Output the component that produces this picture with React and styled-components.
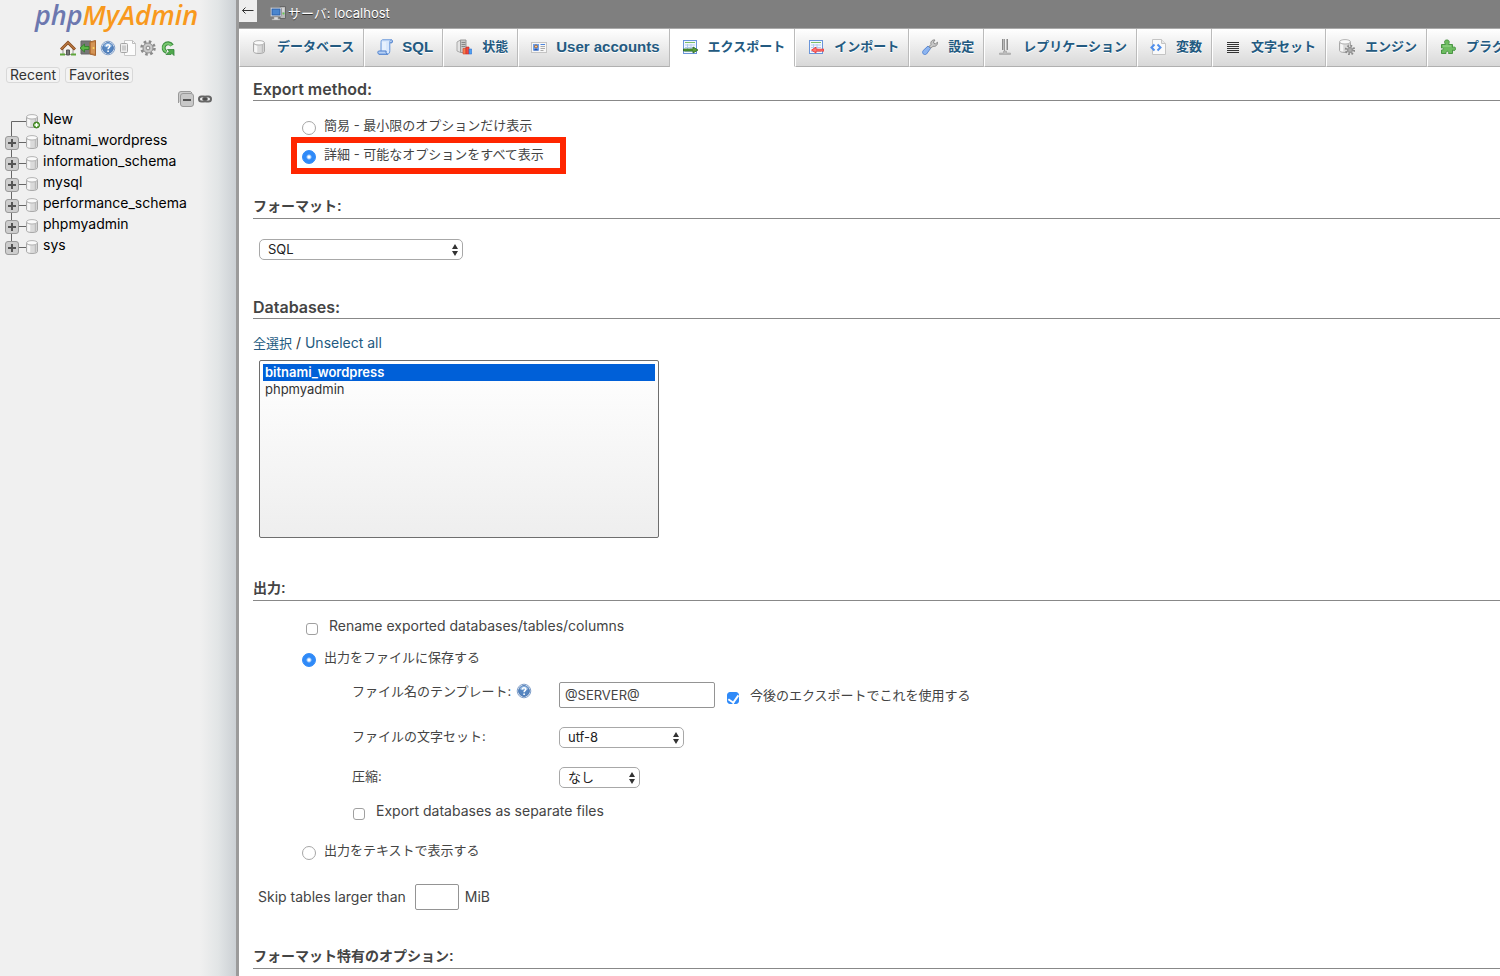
import React, { useState } from 'react';
import styled, { createGlobalStyle, css } from 'styled-components';

const SANS = `Inter, "Noto Sans CJK JP", sans-serif`;
const BOLD = `"Liberation Sans", "Noto Sans CJK JP", sans-serif`;

const GlobalStyle = createGlobalStyle`
  * { box-sizing: border-box; }
  body {
    margin: 0;
    background: #fff;
    color: #444;
    font: 13px/20px ${SANS};
  }
  button, input, select { font: inherit; color: inherit; }
  a { color: #235a81; text-decoration: none; }
`;

/* ---------- page frame ---------- */

const Page = styled.div`
  display: flex;
  min-height: 100vh;
`;

const Sidebar = styled.aside`
  flex: 0 0 239px;
  border-right: 3px solid #9b9b9b;
  background: linear-gradient(to right, #f0f0f0 200px, #e2e5e6 218px, #cbd0d4 236px);
  color: #000;
`;

const Main = styled.main`
  flex: 1;
  min-width: 0;
`;

/* ---------- sidebar ---------- */

const Logo = styled.a`
  display: block;
  padding: 0 0 4px 35px;
  font: italic 600 27px/30px "Open Sans", sans-serif;
  color: #f8991d;
`;

const LogoPhp = styled.span`
  color: #6c78af;
`;

const IconBar = styled.nav`
  display: flex;
  gap: 4px;
  padding: 6px 0 0 60px;

  a { display: flex; }
`;

const PanelButtons = styled.div`
  display: flex;
  gap: 5px;
  padding: 11px 0 0 6px;
`;

const PanelButton = styled.button`
  height: 16px;
  padding: 0 3px;
  border: 1px solid #d8d8d8;
  border-radius: 3px;
  background: #f3f3f3;
  color: #333;
  font-size: 14px;
  line-height: 14px;
`;

const TreeTools = styled.div`
  display: flex;
  align-items: center;
  gap: 4px;
  padding: 8px 0 1px 178px;
`;

const PlainButton = styled.button`
  display: flex;
  padding: 0;
  border: 0;
  background: none;
`;

const Tree = styled.ul`
  margin: 0;
  padding: 0 0 0 5px;
  list-style: none;
`;

const TreeRow = styled.li`
  display: flex;
  height: 21px;
  font-size: 14px;
  line-height: 21px;

  a { padding-left: 3px; color: #000; }
`;

/* ---------- header and tabs ---------- */

const ServerBar = styled.header`
  display: flex;
  align-items: flex-start;
  height: 28px;
  background: #7f7f7f;
  color: #fff;
  line-height: 26px;
  text-shadow: 0 1px 0 #333;
`;

const CollapseButton = styled.button`
  display: flex;
  align-items: center;
  justify-content: center;
  width: 18px;
  height: 22px;
  margin-right: 13px;
  padding: 0;
  border: 0;
  background: #eee;
  color: #333;
`;

const ServerName = styled.a`
  display: flex;
  align-items: center;
  gap: 2px;
  color: #fff;
`;

const Tabs = styled.nav`
  display: flex;
  height: 39px;
  overflow: hidden;
  border-top: 1px solid #aaa;
  background: #f4f4f4;
`;

const Tab = styled.a`
  display: flex;
  flex: none;
  align-items: center;
  gap: ${(p) => (p.$latin ? 9 : 10)}px;
  padding: 0 9px 1px 11px;
  border-right: 1px solid #bbb;
  border-left: 1px solid #fff;
  border-bottom: 1px solid #b0b0b0;
  background: linear-gradient(#fff, #d8d8d8);
  font: bold ${(p) => (p.$latin ? 15 : 13)}px/20px ${BOLD};
  text-shadow: 0 1px 0 #fff;
  white-space: nowrap;

  & + & { padding-left: ${(p) => (p.$latin ? 11 : 12)}px; }

  ${(p) => p.$active && css`
    && { padding-left: 11px; }
    border-bottom-color: #fff;
    background: #fff;
  `}
`;

/* ---------- form ---------- */

const Form = styled.form`
  padding: 10px 0 7px 14px;
`;

const Section = styled.section`
  padding-bottom: ${(p) => p.$after || 0}px;
`;

const Heading = styled.h3`
  height: 24px;
  margin: 0;
  border-bottom: 1px solid #888;
  font: bold 14px/22px ${BOLD};

  ${(p) => p.$latin && css`
    font: 600 16px/24px ${SANS};
  `}
`;

const OptionList = styled.div`
  display: flex;
  flex-direction: column;
  align-items: flex-start;
  gap: 9px;
  padding: 14px 0 0 49px;
`;

const Choice = styled.label`
  position: relative;
  display: flex;
  align-items: center;
  gap: ${(p) => (p.$box ? 11 : 8)}px;
  height: 20px;
  font-size: ${(p) => (p.$latin ? 14 : 13)}px;
  white-space: nowrap;
`;

const Highlight = styled.span`
  position: absolute;
  inset: -7px -22px -10px -11px;
  border: 6px solid #ff2600;
  pointer-events: none;
`;

const Radio = styled.input.attrs({ type: 'radio' })`
  appearance: none;
  width: 14px;
  height: 14px;
  margin: 6px 0 0;
  border: 1px solid #a6a6a6;
  border-radius: 50%;
  background: #fff;

  &:checked {
    border-color: #2f8af8;
    background: radial-gradient(circle, #fff 1px, #2f8af8 3px);
  }
`;

const Check = styled.input.attrs({ type: 'checkbox' })`
  appearance: none;
  display: grid;
  justify-items: center;
  width: 12px;
  height: 12px;
  margin: 6px 0 0;
  border: 1px solid #a0a0a0;
  border-radius: 3px;
  background: #fff;

  &:checked {
    border-color: #2f8af8;
    background: #2f8af8;
  }

  &:checked::after {
    content: "";
    width: 5px;
    height: 8px;
    border: solid #fff;
    border-width: 0 2px 2px 0;
    transform: rotate(35deg);
  }
`;

const SelectWrap = styled.span`
  position: relative;
  display: block;
  width: ${(p) => p.$width}px;

  svg {
    position: absolute;
    top: 5px;
    right: 4px;
    pointer-events: none;
  }
`;

const SelectBox = styled.select`
  appearance: none;
  display: block;
  width: 100%;
  height: 21px;
  padding: 0 18px 0 8px;
  border: 1px solid #a8a8a8;
  border-radius: 5px;
  background: #fff;
  color: #222;
  line-height: 19px;
`;

const FormatField = styled.div`
  padding: 20px 0 0 6px;
`;

const SelectLinks = styled.div`
  padding-top: 14px;
  color: #333;
  font-size: 14px;

  a:first-child { font-size: 13px; }
`;

const DatabaseList = styled.select`
  display: block;
  width: 400px;
  height: 178px;
  margin: 7px 0 0 6px;
  padding: 3px;
  border: 1px solid #6e6e6e;
  border-radius: 2px;
  background: linear-gradient(#fff, #eee);
  outline: 0;

  option {
    min-height: 17px;
    padding: 0 2px;
    color: #333;
    line-height: 17px;
  }

  option:checked {
    background: linear-gradient(#0060d8, #0060d8);
    color: #fff;
    font-weight: 600;
  }
`;

const OutputList = styled.div`
  display: flex;
  flex-direction: column;
  align-items: flex-start;
  gap: 11px;
  padding: 15px 0 0 49px;
`;

const RenameRow = styled.div`
  padding-left: 4px;
`;

const FileFields = styled.div`
  display: flex;
  flex-direction: column;
  gap: 19px;
  padding: 4px 0 8px 50px;
`;

const FieldRow = styled.div`
  display: grid;
  grid-template-columns: 207px auto auto;
  align-items: start;
  line-height: 18px;
`;

const FieldLabel = styled.div`
  display: flex;
  align-items: center;
  gap: 5px;
  height: 18px;

  a { display: flex; }
`;

const TextInput = styled.input`
  width: ${(p) => p.$width}px;
  height: 26px;
  padding: 0 5px;
  border: 1px solid #949494;
  border-radius: 2px;
  background: #fff;
`;

const AfterInput = styled.div`
  padding: 3px 0 0 12px;
`;

const SeparateRow = styled.div`
  padding-left: 1px;
  margin-top: -6px;
`;

const SkipRow = styled.div`
  display: flex;
  align-items: center;
  padding: 24px 0 0 5px;
  font-size: 14px;

  input { margin: 0 6px 0 9px; font-size: 13px; }
`;

/* ---------- drawings ---------- */

const Icon = ({ children, w = 16, h = 16 }) => (
  <svg width={w} height={h} viewBox={`0 0 ${w} ${h}`} fill="none" aria-hidden="true">{children}</svg>
);

const Cylinder = ({ x = 0, y = 0 }) => (
  <g transform={`translate(${x} ${y})`}>
    <path d="M.5 3v8.500c0 1.200 2.400 2 5.500 2s5.500-.8 5.500-2V3z" fill="#dadada" stroke="#a8a8a8" />
    <path d="M2 5v7.200M3.500 5.500v7" stroke="#f6f6f6" strokeWidth="1.500" />
    <path d="M9.500 5v7.500" stroke="#bcbcbc" strokeWidth="1.500" />
    <ellipse cx="6" cy="2.800" rx="5.500" ry="2.200" fill="#fafafa" stroke="#b4b4b4" />
  </g>
);

const Gear = ({ x, y, r }) => (
  <g transform={`translate(${x} ${y})`}>
    <circle r={r - 1} stroke="#8a8a8a" strokeWidth="2.500" strokeDasharray={`${((r - 1) * Math.PI) / 8} ${((r - 1) * Math.PI) / 8}`} />
    <circle r={r - 2.5} fill="#c9c9c9" stroke="#8a8a8a" />
    <circle r={r / 4} fill="#f2f2f2" stroke="#888" />
  </g>
);

const Home = () => (
  <Icon>
    <path d="M3 8v6.500h10V8L8 3z" fill="#f5f2ee" stroke="#999" />
    <path d="M6.500 15v-5h3v5z" fill="#777" stroke="#555" />
    <path d="M1 9.500 8 2.500l7 7" stroke="#8a4a1c" strokeWidth="3" />
    <path d="M1.500 9 8 2.500 14.500 9" stroke="#d99a5c" />
    <path d="M0 14.500h5M11 14.500h5" stroke="#5fa53a" strokeWidth="2" />
  </Icon>
);

const Exit = () => (
  <Icon>
    <path d="M1 1h10v13H1z" fill="#777" stroke="#666" />
    <path d="m10 2 5.500-1.500v15L10 14z" fill="#c98545" stroke="#a5642f" />
    <path d="M12 3v10M14 2.500v11" stroke="#e0a568" />
    <path d="m0 8 4.500-4v2.500H9v3H4.500V12z" fill="#5cb548" stroke="#2f7d28" strokeWidth=".8" />
    <circle cx="13.500" cy="8" r="1" fill="#ffd75e" />
  </Icon>
);

const Help = () => (
  <Icon>
    <circle cx="8" cy="8" r="6.800" fill="#fff" stroke="#7f9fca" />
    <circle cx="8" cy="8" r="5.400" fill="#5585c0" stroke="#4a76b2" />
    <path d="M3.600 6a4.700 4.700 0 0 1 8.800 0c-2 1.600-6 1.800-8.800 0z" fill="#8db4df" />
    <path d="M6.300 6.500c0-2.400 3.600-2.300 3.500-.2 0 1.400-1.700 1.400-1.700 2.900" stroke="#fff" strokeWidth="1.500" />
    <circle cx="8.100" cy="11.200" r=".9" fill="#fff" />
  </Icon>
);

const Docs = () => (
  <Icon>
    <path d="M4.500.5h8l3 3v12h-11z" fill="#fcfcfc" stroke="#c8c8c8" />
    <path d="M12.500.5v3h3" stroke="#bdbdbd" />
    <rect x=".5" y="3.500" width="7" height="9" rx="1" fill="#ededed" stroke="#a5a5a5" />
    <path d="M3 5.500v5M5 5.500v5" stroke="#aaa" />
  </Icon>
);

const Settings = () => (
  <Icon><Gear x={8} y={8} r={7.5} /></Icon>
);

const Reload = () => (
  <Icon>
    <path d="M12 5.500A4.500 4.500 0 1 0 6.500 12" stroke="#3d8f40" strokeWidth="4" />
    <path d="M14 9.500H7.500l1.800 1.700L6 14.500h5l1-1 2 2z" fill="#4fa84c" stroke="#34833a" strokeWidth=".8" />
    <path d="M11.500 5.500A4.300 4.300 0 1 0 6.500 11.800" stroke="#79c870" strokeWidth="2" />
  </Icon>
);

const CollapseAll = () => (
  <Icon>
    <path d="M.5 12V3A2.500 2.500 0 0 1 3 .5h9.500L14 2" fill="#ccc" stroke="#999" />
    <rect x="2.500" y="2.500" width="13" height="13" rx="2.500" fill="#c8c8c8" stroke="#999" />
    <path d="M5 9h8" stroke="#555" strokeWidth="2" />
  </Icon>
);

const Link = () => (
  <Icon w={14}>
    <rect x="1" y="5.500" width="7" height="5" rx="2.500" stroke="#666" strokeWidth="2" />
    <rect x="6" y="5.500" width="7" height="5" rx="2.500" stroke="#666" strokeWidth="2" />
    <path d="M4 8h6" stroke="#333" />
  </Icon>
);

const Twig = ({ first, last }) => (
  <Icon w={21} h={21}>
    <path d={first ? 'M6.500 21V13.500H21' : `M6.500 0V${last ? 13 : 21}M7 13.500h14`} stroke="#666" />
    {!first && (
      <>
        <rect x=".5" y="7.500" width="13" height="13" rx="2.500" fill="#cdcdcd" stroke="#999" />
        <path d="M3 14h8M7 10v8" stroke="#555" strokeWidth="2" />
      </>
    )}
  </Icon>
);

const DbIcon = ({ add }) => (
  <Icon w={14} h={21}>
    <Cylinder y={6} />
    {add && (
      <>
        <circle cx="10.500" cy="17" r="3" fill="#5aa832" stroke="#38761d" />
        <path d="M8.500 17h4M10.500 15v4" stroke="#fff" strokeWidth="1.300" />
      </>
    )}
  </Icon>
);

const ServerIcon = () => (
  <Icon>
    <path d="M10 1.500h5.500v12H10z" fill="#b9b9b9" stroke="#666" />
    <path d="M11.500 4h3M11.500 6h3" stroke="#eee" />
    <circle cx="13.500" cy="8.500" r="1" fill="#5fd04a" />
    <rect x=".5" y="2.500" width="11" height="9" rx="1" fill="#e8e8e8" stroke="#999" />
    <rect x="2" y="4" width="8" height="6" fill="#4a86cf" stroke="#2d5fa6" />
    <path d="M4 12h4v2h2v1H2v-1h2z" fill="#ddd" stroke="#999" strokeWidth=".5" />
  </Icon>
);

const TabDatabase = () => <Icon><Cylinder x={2} y={1} /></Icon>;

const TabSql = () => (
  <Icon>
    <path d="M4 3.500C4 1.800 4.500.8 5.500.8h9c-1.200.2-1.700 1-1.700 2.700v8c0 2-.5 3.200-2 3.700H2C3.300 14.500 4 13.500 4 12z" fill="#d9e8fc" stroke="#6494da" />
    <path d="M2 15.200C.6 15 .5 12.800 1.500 12h7.700c-.6 1.200 0 3 1.500 3.200z" fill="#b6d0f5" stroke="#4c7fcc" />
    <path d="M14.500.8c1.200.3 1.200 2 .5 3h-2.200" fill="#a9c6f0" stroke="#4c7fcc" />
    <path d="M6 3v8M8 3v8" stroke="#f4f9ff" />
  </Icon>
);

const TabStatus = () => (
  <Icon>
    <path d="M1 3 4.500 1v12.500L1 12z" fill="#e4e4e4" stroke="#aaa" />
    <path d="M4.500 1H10v12.500H4.500z" fill="#c9c9c9" stroke="#999" />
    <path d="M5.500 3.500h4M5.500 5.500h4M5.500 7.500h4" stroke="#888" />
    <path d="M7 9.500h3V15H7z" fill="#f47c4e" stroke="#d0402a" strokeWidth=".6" />
    <path d="M10 8h3v7h-3z" fill="#f2463c" stroke="#c42a24" strokeWidth=".6" />
    <path d="M13 10h2.700v5H13z" fill="#4ea0f2" stroke="#2e6fd0" strokeWidth=".6" />
  </Icon>
);

const TabUsers = () => (
  <Icon>
    <rect x=".5" y="3.500" width="15" height="10" fill="#f7f7f7" stroke="#c4c4c4" />
    <path d="M2 5h6v6.500H2z" fill="#6aa0ee" />
    <circle cx="5" cy="7.500" r="1.500" fill="#f4c28e" stroke="#8e562c" strokeWidth=".8" />
    <path d="M2.500 11.500c.5-2 4.500-2 5 0z" fill="#2753a8" />
    <path d="M9.500 7.500h4.500M9.500 9.500h4.500M9.500 11.500h3" stroke="#aaa" />
    <path d="M9.500 5.500h4.500" stroke="#4d85dc" />
  </Icon>
);

const Sheet = () => (
  <>
    <rect x="1.500" y="1.500" width="13" height="13" fill="#f3f8ff" stroke="#6a95da" />
    <path d="M3 3.500h10" stroke="#7cbf68" />
    <path d="M3 6h10M3 8.500h10M3 12.500h10M5.500 5v8M9 5v8" stroke="#b4ccee" />
  </>
);

const TabExport = () => (
  <Icon>
    <Sheet />
    <path d="M1.500 10h9.500V8l5 3-5 3v-2H1.500z" fill="#5aa03c" stroke="#2c6a1c" strokeWidth=".8" />
  </Icon>
);

const TabImport = () => (
  <Icon>
    <Sheet />
    <path d="M16 10.200H8V8.200l-4.500 2.900L8 14v-1.900h8z" fill="#ff7a72" stroke="#ee2a2a" strokeWidth=".8" />
  </Icon>
);

const TabSettings = () => (
  <Icon>
    <path d="m8.500 9.500-2.500-2.500L1.200 11.500c-1.800 2.500.8 5.200 3.300 3.500z" fill="#8cb4f0" stroke="#5a88d2" />
    <path d="M7 7.500 9 5.500c-.8-2.500 1-5 4-4.500L11.500 3l.5 1.500 1.500.3 2-1.600c.3 3-2.200 4.800-4.500 4L9 9.200z" fill="#c8c8c8" stroke="#8a8a8a" />
  </Icon>
);

const TabReplication = () => (
  <Icon>
    <path d="M5.500 0v11M10.500 0v11" stroke="#8a8a8a" />
    <path d="M6.500 0v11M9.500 0v11" stroke="#bbb" />
    <path d="M7.500 0v12" stroke="#999" />
    <path d="M6.500 12h3v2h4v1.500h-11V14h4z" fill="#bbb" stroke="#999" strokeWidth=".5" />
  </Icon>
);

const TabVariables = () => (
  <Icon>
    <path d="M2.500.5h9l4 4v11h-13z" fill="#fafafa" stroke="#c4c4c4" />
    <path d="M11.500.5v4h4" fill="#e8e8e8" stroke="#c4c4c4" />
    <path d="M4.500 5.500 1.500 8.500l3 3M7.500 5.500l3 3-3 3" stroke="#4f8eec" strokeWidth="2" />
  </Icon>
);

const TabCharsets = () => (
  <Icon>
    <path d="M2 3.500h12M2 5.500h12M2 7.500h12M2 9.500h12M2 11.500h12M2 13.500h12" stroke="#333" />
  </Icon>
);

const TabEngines = () => (
  <Icon>
    <Cylinder />
    <circle cx="11" cy="11" r="4" fill="#ddd" />
    <Gear x={11} y={11} r={5} />
  </Icon>
);

const TabPlugins = () => (
  <Icon>
    <path d="M1.500 5.500h4C3.500 2 5 1 7 1s3 1.500 1.500 4.500h4v3c2-1 3-.5 3 1.200s-1 2.300-3 1.300v3.500h-4c1-3-3-3-2.500 0H1.500v-3.500c2.500.5 2.500-3 0-2z" fill="#6dbc60" stroke="#4a9644" />
    <path d="M3 7h8" stroke="#9ad78e" />
  </Icon>
);

const BackArrow = () => (
  <Icon w={14} h={14}>
    <path d="M1.500 6.500h11M4.500 3.500l-3 3 3 3" stroke="#333" />
  </Icon>
);

const Arrows = () => (
  <Icon w={8} h={12}>
    <path d="M4 0l3 5H1zM4 12l3-5H1z" fill="#333" />
  </Icon>
);

/* ---------- assembled parts ---------- */

const NAV_ICONS = [
  ['ホーム', Home], ['ログアウト', Exit], ['phpMyAdmin ドキュメント', Help],
  ['ドキュメント', Docs], ['設定', Settings], ['再読込', Reload],
];

const DATABASES = ['bitnami_wordpress', 'information_schema', 'mysql', 'performance_schema', 'phpmyadmin', 'sys'];

const TABS = [
  ['データベース', TabDatabase], ['SQL', TabSql, true], ['状態', TabStatus],
  ['User accounts', TabUsers, true], ['エクスポート', TabExport], ['インポート', TabImport],
  ['設定', TabSettings], ['レプリケーション', TabReplication], ['変数', TabVariables],
  ['文字セット', TabCharsets], ['エンジン', TabEngines], ['プラグイン', TabPlugins],
];

const Dropdown = ({ id, label, width, options }) => (
  <SelectWrap $width={width}>
    <SelectBox id={id} aria-label={label}>
      {options.map((o) => <option key={o}>{o}</option>)}
    </SelectBox>
    <Arrows />
  </SelectWrap>
);

const Navigation = () => (
  <Sidebar>
    <Logo href="#home"><LogoPhp>php</LogoPhp>MyAdmin</Logo>
    <IconBar>
      {NAV_ICONS.map(([name, Glyph]) => (
        <a key={name} href="#nav" aria-label={name}><Glyph /></a>
      ))}
    </IconBar>
    <PanelButtons>
      <PanelButton type="button">Recent</PanelButton>
      <PanelButton type="button">Favorites</PanelButton>
    </PanelButtons>
    <TreeTools>
      <PlainButton type="button" aria-label="Collapse all"><CollapseAll /></PlainButton>
      <PlainButton type="button" aria-label="Link with main panel"><Link /></PlainButton>
    </TreeTools>
    <Tree>
      <TreeRow>
        <Twig first />
        <DbIcon add />
        <a href="#new">New</a>
      </TreeRow>
      {DATABASES.map((name, i) => (
        <TreeRow key={name}>
          <PlainButton type="button" aria-label={`Expand ${name}`}>
            <Twig last={i === DATABASES.length - 1} />
          </PlainButton>
          <DbIcon />
          <a href={`#${name}`}>{name}</a>
        </TreeRow>
      ))}
    </Tree>
  </Sidebar>
);

export default function App() {
  const [method, setMethod] = useState('custom');
  const [output, setOutput] = useState('file');

  return (
    <>
      <GlobalStyle />
      <Page>
        <Navigation />
        <Main>
          <ServerBar>
            <CollapseButton type="button" aria-label="Hide panel"><BackArrow /></CollapseButton>
            <ServerName href="#server"><ServerIcon />サーバ: localhost</ServerName>
          </ServerBar>
          <Tabs>
            {TABS.map(([name, Glyph, latin]) => (
              <Tab key={name} href="#tab" $latin={latin} $active={name === 'エクスポート'}>
                <Glyph />{name}
              </Tab>
            ))}
          </Tabs>
          <Form>
            <Section $after={31}>
              <Heading $latin>Export method:</Heading>
              <OptionList>
                <Choice>
                  <Radio name="method" checked={method === 'quick'} onChange={() => setMethod('quick')} />
                  簡易 - 最小限のオプションだけ表示
                </Choice>
                <Choice>
                  <Radio name="method" checked={method === 'custom'} onChange={() => setMethod('custom')} />
                  詳細 - 可能なオプションをすべて表示
                  <Highlight />
                </Choice>
              </OptionList>
            </Section>

            <Section $after={35}>
              <Heading>フォーマット:</Heading>
              <FormatField>
                <Dropdown id="format" label="フォーマット" width={204} options={['SQL', 'CSV', 'JSON']} />
              </FormatField>
            </Section>

            <Section $after={39}>
              <Heading $latin>Databases:</Heading>
              <SelectLinks>
                <a href="#all">全選択</a> / <a href="#none">Unselect all</a>
              </SelectLinks>
              <DatabaseList multiple aria-label="Databases" defaultValue={['bitnami_wordpress']}>
                <option>bitnami_wordpress</option>
                <option>phpmyadmin</option>
              </DatabaseList>
            </Section>

            <Section $after={35}>
              <Heading>出力:</Heading>
              <OutputList>
                <RenameRow>
                  <Choice $latin $box><Check />Rename exported databases/tables/columns</Choice>
                </RenameRow>
                <Choice>
                  <Radio name="output" checked={output === 'file'} onChange={() => setOutput('file')} />
                  出力をファイルに保存する
                </Choice>
                <FileFields>
                  <FieldRow>
                    <FieldLabel>
                      <label htmlFor="template">ファイル名のテンプレート:</label>
                      <a href="#help" aria-label="ドキュメント"><Help /></a>
                    </FieldLabel>
                    <TextInput id="template" $width={156} defaultValue="@SERVER@" />
                    <AfterInput>
                      <Choice $box><Check defaultChecked />今後のエクスポートでこれを使用する</Choice>
                    </AfterInput>
                  </FieldRow>
                  <FieldRow>
                    <label htmlFor="charset">ファイルの文字セット:</label>
                    <Dropdown id="charset" width={125} options={['utf-8', 'sjis', 'euc-jp']} />
                  </FieldRow>
                  <FieldRow>
                    <label htmlFor="compression">圧縮:</label>
                    <Dropdown id="compression" width={81} options={['なし', 'zip', 'gzip']} />
                  </FieldRow>
                  <SeparateRow>
                    <Choice $latin $box><Check />Export databases as separate files</Choice>
                  </SeparateRow>
                </FileFields>
                <Choice>
                  <Radio name="output" checked={output === 'text'} onChange={() => setOutput('text')} />
                  出力をテキストで表示する
                </Choice>
              </OutputList>
              <SkipRow>
                <label htmlFor="skip">Skip tables larger than</label>
                <TextInput id="skip" $width={44} />
                MiB
              </SkipRow>
            </Section>

            <Section>
              <Heading>フォーマット特有のオプション:</Heading>
            </Section>
          </Form>
        </Main>
      </Page>
    </>
  );
}
